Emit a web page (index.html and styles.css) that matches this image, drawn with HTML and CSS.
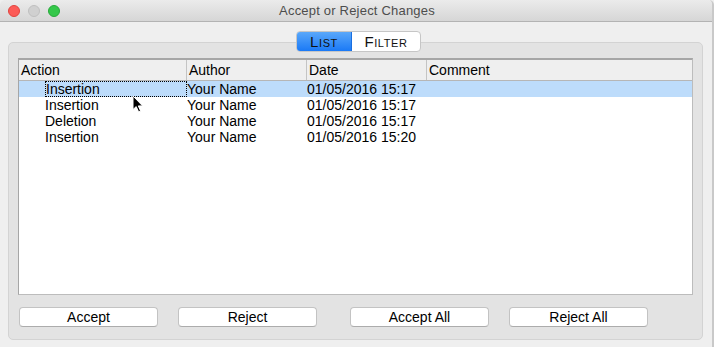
FILE: index.html
```html
<!DOCTYPE html>
<html lang="en">

<head>
    <meta charset="UTF-8" />
    <meta name="viewport" content="width=device-width, initial-scale=1.0" />
    <title>Accept or Reject Changes</title>
    <link rel="stylesheet" href="styles.css">
</head>

<body>
    <div class="window">
        <div class="titlebar">
            <div class="lights">
                <span class="light close"></span>
                <span class="light min"></span>
                <span class="light max"></span>
            </div>
            <div class="title">Accept or Reject Changes</div>
            <div></div>
        </div>

        <div class="content">
            <div class="tabs">
                <span class="tab active">List</span>
                <span class="tab">Filter</span>
            </div>

            <div class="panel">
                <div class="list">
                    <div class="list-head">
                        <div class="head-cell">Action</div>
                        <div class="head-cell">Author</div>
                        <div class="head-cell">Date</div>
                        <div class="head-cell last">Comment</div>
                    </div>

                    <div class="row selected">
                        <div class="cell action"><span class="focus">Insertion</span></div>
                        <div class="cell">Your Name</div>
                        <div class="cell">01/05/2016 15:17</div>
                        <div class="cell"></div>
                    </div>
                    <div class="row">
                        <div class="cell action"><span>Insertion</span></div>
                        <div class="cell">Your Name</div>
                        <div class="cell">01/05/2016 15:17</div>
                        <div class="cell"></div>
                    </div>
                    <div class="row">
                        <div class="cell action"><span>Deletion</span></div>
                        <div class="cell">Your Name</div>
                        <div class="cell">01/05/2016 15:17</div>
                        <div class="cell"></div>
                    </div>
                    <div class="row">
                        <div class="cell action"><span>Insertion</span></div>
                        <div class="cell">Your Name</div>
                        <div class="cell">01/05/2016 15:20</div>
                        <div class="cell"></div>
                    </div>

                    <!-- mouse pointer over the first row -->
                    <svg class="pointer" width="12" height="18" viewBox="0 0 12 18">
                        <path d="M1 1 L1 14.5 L4.2 11.6 L6.6 16.8 L8.6 15.9 L6.3 10.9 L10.6 10.9 Z" fill="#000" stroke="#fff" stroke-width="1" stroke-linejoin="round" />
                    </svg>
                </div>

                <div class="buttons">
                    <button class="btn">Accept</button>
                    <button class="btn">Reject</button>
                    <button class="btn wide-gap">Accept All</button>
                    <button class="btn">Reject All</button>
                </div>
            </div>
        </div>
    </div>
</body>

</html>
```

FILE: styles.css
```css
body {
    margin: 0;
    background: #efefef;
    font-family: 'Liberation Sans', Arial, sans-serif;
}

.window {
    width: 714px;
    height: 347px;
    box-sizing: border-box;
    background: #efefef;
    border-right: 2px solid #c9c9c9;
    border-radius: 5px 5px 0 0;
    overflow: hidden;
    position: relative;
}

/* Title bar */
.titlebar {
    height: 22px;
    box-sizing: border-box;
    display: grid;
    grid-template-columns: 1fr auto 1fr;
    align-items: center;
    background: linear-gradient(#ebebeb, #d6d6d6);
    border-bottom: 1px solid #b3b3b3;
}

.lights {
    display: flex;
    gap: 8px;
    padding-left: 8px;
}

.light {
    width: 12px;
    height: 12px;
    box-sizing: border-box;
    border-radius: 50%;
    display: block;
}

.light.close {
    background: #fc5b57;
    border: 1px solid #e0443e;
}

.light.min {
    background: #d0d0d0;
    border: 1px solid #bfbfbf;
}

.light.max {
    background: #34c84a;
    border: 1px solid #27a93b;
}

.title {
    font-size: 13px;
    letter-spacing: 0.2px;
    color: #4d4d4d;
    padding-left: 2px;
}

/* Content */
.content {
    padding-top: 9px;
}

.tabs {
    display: flex;
    width: fit-content;
    margin: 0 0 -10px 296px;
    height: 21px;
    box-sizing: border-box;
    border-radius: 4px;
    border: 1px solid #c6c6c6;
    background: #fff;
    position: relative;
    z-index: 1;
    overflow: hidden;
}

.tab {
    font-variant: small-caps;
    font-size: 15px;
    letter-spacing: 0.6px;
    line-height: 18px;
    color: #111;
    text-align: center;
    width: 68px;
    padding-top: 1px;
}

.tab.active {
    width: 54px;
    background: linear-gradient(#5aa8fa, #1a79f6);
    border-right: 1px solid #1a6fe0;
}

.panel {
    margin: 0 9px 0 8px;
    height: 298px;
    box-sizing: border-box;
    background: #e3e3e3;
    border: 1px solid #d3d3d3;
    border-radius: 5px;
    padding: 15px 9px 12px 9px;
    display: flex;
    flex-direction: column;
}

/* Change list */
.list {
    height: 238px;
    box-sizing: border-box;
    background: #fff;
    border: 1px solid #bcbcbc;
    border-top: 2px solid #a6a6a6;
    border-left: 1px solid #a6a6a6;
    position: relative;
    font-size: 14px;
    color: #000;
}

.list-head,
.row {
    display: grid;
    grid-template-columns: 168px 120px 120px 1fr;
}

.list-head {
    height: 21px;
    box-sizing: border-box;
    background: #efefef;
    border-bottom: 1px solid #b6b6b6;
}

.head-cell {
    line-height: 20px;
    padding-left: 2px;
    border-right: 1px solid #c4c4c4;
}

.head-cell.last {
    border-right: none;
}

.row {
    height: 16px;
    line-height: 16px;
}

.row.selected {
    background: #bddcfb;
}

.cell {
    white-space: nowrap;
    overflow: hidden;
}

.cell.action {
    padding-left: 26px;
}

.cell.action span {
    display: block;
    height: 16px;
    box-sizing: border-box;
}

.focus {
    border: 1px dotted #000;
    line-height: 14px;
}

.pointer {
    position: absolute;
    left: 113px;
    top: 35px;
}

/* Buttons */
.buttons {
    display: flex;
    gap: 20px;
    margin-top: 12px;
    padding-left: 1px;
}

.btn {
    width: 139px;
    height: 20px;
    padding: 0;
    font-family: 'Liberation Sans', Arial, sans-serif;
    font-size: 14px;
    line-height: 18px;
    color: #000;
    background: #fff;
    border: 1px solid #c3c3c3;
    border-bottom-color: #acacac;
    border-radius: 4px;
}

.btn.wide-gap {
    margin-left: 13px;
}
```
